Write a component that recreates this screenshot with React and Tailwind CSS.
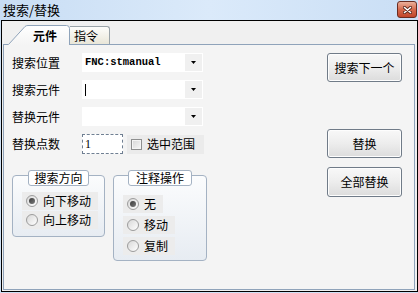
import React from 'react';

// Search / replace dialog (元件 tab)

function Combo({ children }) {
    return (
        <div className="flex h-[19px] w-[121px] bg-white p-[1px]">
            <div className="flex flex-1 items-center pl-[2px] font-['Liberation_Mono',monospace] text-[10.5px] font-bold leading-none text-black">
                {children}
            </div>
            <div className="flex w-[17px] items-center justify-center bg-[#f0f0f0]">
                <svg width="5" height="3" viewBox="0 0 5 3">
                    <path d="M0 0h5L2.5 3z" fill="#000" />
                </svg>
            </div>
        </div>
    );
}

function Radio({ label, checked }) {
    return (
        <div className="flex h-[18px] w-fit items-center gap-[5px] bg-[#ececec] pl-[4px] pr-[7px]">
            <span className="flex h-[12px] w-[12px] items-center justify-center rounded-full border border-[#9c9c9c] bg-linear-to-br from-[#d8d8d8] to-white">
                {checked && <span className="h-[6px] w-[6px] rounded-full bg-linear-to-br from-[#3c3c3c] to-[#7a7a7a]" />}
            </span>
            <span className="leading-none">{label}</span>
        </div>
    );
}

function Btn({ children, tall }) {
    return (
        <div
            className={
                'flex w-[75px] items-center justify-center rounded-[3px] border border-[#707b88] bg-linear-to-b from-[#f8f8f8] via-[#ededed] to-[#dcdcdc] text-[12px] leading-none shadow-[inset_0_0_0_1px_#fdfdfd] ' +
                (tall ? 'h-[30px]' : 'h-[29px]')
            }
        >
            {children}
        </div>
    );
}

function Group({ title, legendLeft, legendWidth, className, children }) {
    return (
        <div
            className={
                'relative rounded-[4px] border border-[#a4b2c3] bg-linear-to-b from-[#fbfcfd] to-[#e7ecf2] ' + className
            }
        >
            <div
                className={
                    'absolute -top-[6px] flex h-[16px] items-center justify-center rounded-[3px] border border-[#a4b2c3] bg-white leading-none ' +
                    legendLeft + ' ' + legendWidth
                }
            >
                {title}
            </div>
            {children}
        </div>
    );
}

export default function App() {
    return (
        <div className="h-[293px] w-[418px] overflow-hidden bg-[#cfe1f5] font-['Noto_Sans_CJK_SC',sans-serif] text-[12px] text-black">
            {/* title bar */}
            <div className="flex h-[20px] items-start justify-between bg-linear-to-r from-[#c8ddf4] via-[#dbeafa] to-[#c9def5]">
                <div className="pl-[3px] pt-[2px] text-[13px] leading-[16px]">搜索/替换</div>
                <div className="mr-[1px] mt-[1px] flex h-[17px] w-[20px] items-center justify-center rounded-[3px] border border-[#6a2c21] bg-linear-to-b from-[#eab09c] via-[#d56a4d] to-[#c1452a]">
                    <svg width="9" height="8" viewBox="0 0 9 8">
                        <path d="M1.5 1.5l6 5M7.5 1.5l-6 5" stroke="#5b2a20" strokeWidth="3.2" strokeLinecap="round" />
                        <path d="M1.5 1.5l6 5M7.5 1.5l-6 5" stroke="#fff" strokeWidth="1.6" strokeLinecap="round" />
                    </svg>
                </div>
            </div>

            {/* client area */}
            <div className="ml-[1px] h-[272px] w-[417px] border border-black bg-[#f0f0f0]">
                {/* tab strip */}
                <div className="flex h-[23px] items-end pl-[6px]">
                    <div className="relative z-10 -mb-px flex h-[20px] w-[62px] items-center pl-[25px] pt-[2px] font-bold leading-none">
                        <svg className="absolute inset-0" width="62" height="20" viewBox="0 0 62 20">
                            <defs>
                                <linearGradient id="tabg" x1="0" y1="0" x2="0" y2="1">
                                    <stop offset="0" stopColor="#ffffff" />
                                    <stop offset="1" stopColor="#f4f4f4" />
                                </linearGradient>
                            </defs>
                            <path d="M0 20L17 1.5Q18 0.5 20 0.5L58.5 0.5Q61.5 0.5 61.5 3.5L61.5 20z" fill="url(#tabg)" />
                            <path d="M0.5 19.5L17 1.5Q18 0.5 20 0.5L58.5 0.5Q61.5 0.5 61.5 3.5L61.5 20" fill="none" stroke="#8fa3ba" />
                        </svg>
                        <span className="relative">元件</span>
                    </div>
                    <div className="flex h-[18px] w-[40px] items-center rounded-tr-[3px] border border-b-0 border-l-0 border-[#9aa3a8] bg-linear-to-b from-[#fdfdfb] to-[#e9e6d8] pl-[4px] leading-none">
                        指令
                    </div>
                </div>

                {/* tab page */}
                <div className="ml-[1px] flex h-[246px] w-[412px] justify-between border border-[#8fa3ba] bg-[#f4f4f4] pl-[8px] pr-[12px] pt-[8px]">
                    {/* left column */}
                    <div className="flex flex-col">
                        <div className="flex flex-col gap-[8px]">
                            <div className="flex h-[19px] items-center">
                                <span className="w-[70px] leading-none">搜索位置</span>
                                <Combo>FNC:stmanual</Combo>
                            </div>
                            <div className="flex h-[19px] items-center">
                                <span className="w-[70px] leading-none">搜索元件</span>
                                <Combo>
                                    <span className="h-[12px] w-px bg-black" />
                                </Combo>
                            </div>
                            <div className="flex h-[19px] items-center">
                                <span className="w-[70px] leading-none">替换元件</span>
                                <Combo />
                            </div>
                            <div className="flex h-[20px] items-center">
                                <span className="w-[70px] leading-none">替换点数</span>
                                <div className="flex h-[20px] w-[41px] items-center border border-dashed border-[#6f7f92] bg-white pl-[2px] font-['Liberation_Serif',serif] text-[12px] leading-none">
                                    1
                                </div>
                                <div className="ml-[4px] flex h-[19px] w-[77px] items-center gap-[5px] bg-[#ebebeb] pl-[4px]">
                                    <span className="h-[11px] w-[11px] border border-[#8e8f8f] bg-linear-to-br from-[#d6d6d6] to-[#f8f8f8] shadow-[inset_0_0_0_1px_#f4f4f4]" />
                                    <span className="leading-none">选中范围</span>
                                </div>
                            </div>
                        </div>

                        <div className="mt-[21px] flex items-start gap-[8px]">
                            <Group title="搜索方向" legendLeft="left-[15px]" legendWidth="w-[61px]" className="h-[62px] w-[93px] pl-[9px] pt-[16px]">
                                <div className="flex flex-col gap-[1px]">
                                    <Radio label="向下移动" checked />
                                    <Radio label="向上移动" />
                                </div>
                            </Group>
                            <Group title="注释操作" legendLeft="left-[14px]" legendWidth="w-[64px]" className="h-[86px] w-[94px] pl-[9px] pt-[19px]">
                                <div className="flex flex-col gap-[3px]">
                                    <Radio label="无" checked />
                                    <Radio label="移动" />
                                    <Radio label="复制" />
                                </div>
                            </Group>
                        </div>
                    </div>

                    {/* right column */}
                    <div className="flex flex-col">
                        <Btn>搜索下一个</Btn>
                        <div className="mt-[47px]">
                            <Btn>替换</Btn>
                        </div>
                        <div className="mt-[9px]">
                            <Btn tall>全部替换</Btn>
                        </div>
                    </div>
                </div>
            </div>
        </div>
    );
}
